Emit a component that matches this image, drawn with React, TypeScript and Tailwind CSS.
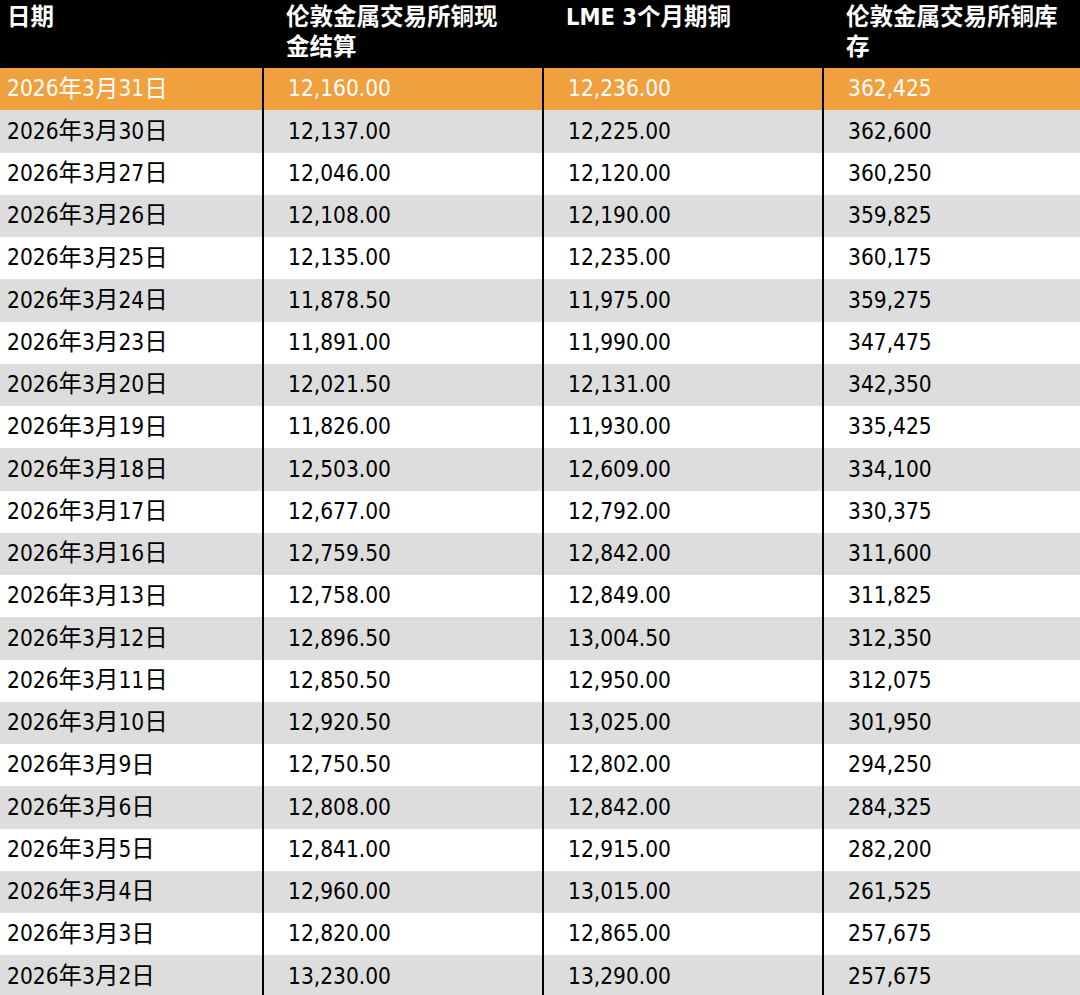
import React from 'react';

const rows: [string, string, string, string][] = [
  ['2026年3月31日', '12,160.00', '12,236.00', '362,425'],
  ['2026年3月30日', '12,137.00', '12,225.00', '362,600'],
  ['2026年3月27日', '12,046.00', '12,120.00', '360,250'],
  ['2026年3月26日', '12,108.00', '12,190.00', '359,825'],
  ['2026年3月25日', '12,135.00', '12,235.00', '360,175'],
  ['2026年3月24日', '11,878.50', '11,975.00', '359,275'],
  ['2026年3月23日', '11,891.00', '11,990.00', '347,475'],
  ['2026年3月20日', '12,021.50', '12,131.00', '342,350'],
  ['2026年3月19日', '11,826.00', '11,930.00', '335,425'],
  ['2026年3月18日', '12,503.00', '12,609.00', '334,100'],
  ['2026年3月17日', '12,677.00', '12,792.00', '330,375'],
  ['2026年3月16日', '12,759.50', '12,842.00', '311,600'],
  ['2026年3月13日', '12,758.00', '12,849.00', '311,825'],
  ['2026年3月12日', '12,896.50', '13,004.50', '312,350'],
  ['2026年3月11日', '12,850.50', '12,950.00', '312,075'],
  ['2026年3月10日', '12,920.50', '13,025.00', '301,950'],
  ['2026年3月9日', '12,750.50', '12,802.00', '294,250'],
  ['2026年3月6日', '12,808.00', '12,842.00', '284,325'],
  ['2026年3月5日', '12,841.00', '12,915.00', '282,200'],
  ['2026年3月4日', '12,960.00', '13,015.00', '261,525'],
  ['2026年3月3日', '12,820.00', '12,865.00', '257,675'],
  ['2026年3月2日', '13,230.00', '13,290.00', '257,675'],
];

const font = { fontFamily: '"DejaVu Sans Condensed", "DejaVu Sans", "Noto Sans CJK SC", sans-serif' };

// 日期里的汉字比数字略大
const DateText: React.FC<{ text: string }> = ({ text }) => (
  <>
    {text.split(/([年月日])/).map((part, i) =>
      /[年月日]/.test(part) ? (
        <span key={i} className="text-[23.5px]">{part}</span>
      ) : (
        <span key={i}>{part}</span>
      )
    )}
  </>
);

export default function App() {
  return (
    <div className="w-[1080px] h-[995px] overflow-hidden bg-white" style={font}>
      {/* 表头 */}
      <div className="grid grid-cols-[262px_280px_280px_1fr] h-[68px] bg-black text-white font-bold text-[23.5px] leading-[30px]">
        <div className="pl-[7px] pt-[2px]">日期</div>
        <div className="pl-6 pt-[2px]">
          伦敦金属交易所铜现
          <br />
          金结算
        </div>
        <div className="pl-6 pt-[2px]">LME 3个月期铜</div>
        <div className="pl-6 pt-[2px]">
          伦敦金属交易所铜库
          <br />
          存
        </div>
      </div>

      {/* 数据行 */}
      {rows.map((r, i) => {
        const bg = i === 0 ? 'bg-[#f0a03c] text-white' : i % 2 === 1 ? 'bg-[#dddddd] text-black' : 'bg-white text-black';
        return (
          <div key={r[0]} className={`grid grid-cols-[262px_280px_280px_1fr] h-[42.25px] text-[22.5px] ${bg}`}>
            <div className="flex items-center pl-[7px]">
              <DateText text={r[0]} />
            </div>
            <div className="flex items-center pl-6 border-l-2 border-black">{r[1]}</div>
            <div className="flex items-center pl-6 border-l-2 border-black">{r[2]}</div>
            <div className="flex items-center pl-6 border-l-2 border-black">{r[3]}</div>
          </div>
        );
      })}
    </div>
  );
}
